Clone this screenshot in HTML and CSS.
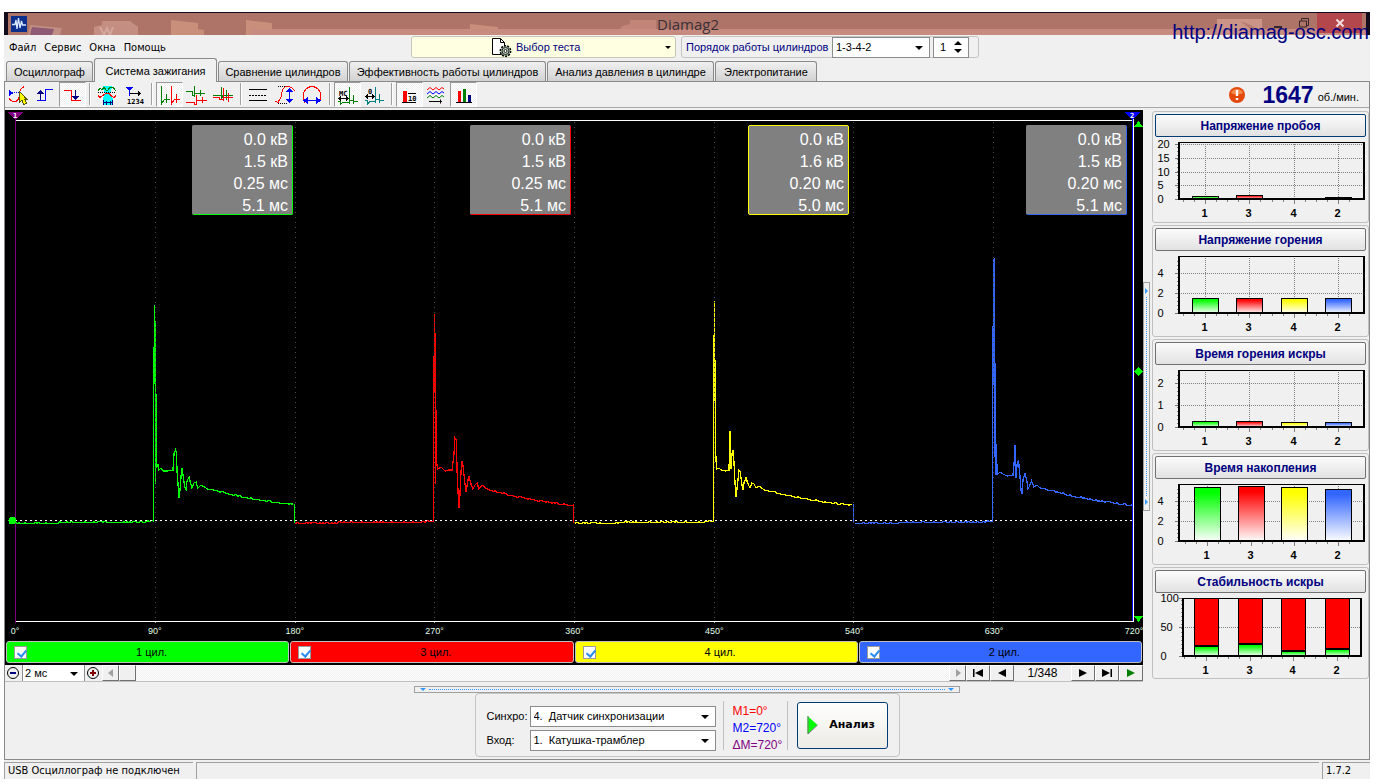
FILE: index.html
```html
<!DOCTYPE html>
<html lang="ru">
<head>
<meta charset="utf-8">
<title>Diamag2</title>
<link rel="stylesheet" href="styles.css">
</head>
<body>
<div class="window">
  <header class="titlebar">
    <svg class="wallpaper" viewBox="0 0 1358 22" preserveAspectRatio="none" aria-hidden="true">
      <path d="M242 16H1358V22H242Z" fill="#c88b7f"/>
      <path d="M22 12L54 15L52 22H20Z" fill="#c18e83"/><path d="M24 14L46 16L44 22H22Z" fill="#8f5a74"/>
      <path d="M94 8H122L130 14V22H86V14L94 12Z" fill="#c48e82"/><path d="M92 14L96 22L99 15L102 22L105 14" fill="none" stroke="#d3a79c" stroke-width="2"/>
      <path d="M163 7L190 10V16L196 17V22H163Z" fill="#c98f7b"/><path d="M238 7L264 10V16H242V22H238Z" fill="#c98f7b"/>
      <path d="M462 11L490 14V16H462Z" fill="#c98f7b"/><path d="M614 13L622 11V7H648V16H612Z" fill="#c38577"/>
      <path d="M1209 6H1254V22H1209Z" fill="#cc9488"/><path d="M1232 8Q1246 12 1250 18L1242 16Z" fill="#b77d73"/>
    </svg>
    <svg class="app-icon" viewBox="0 0 16 16" aria-hidden="true"><rect width="16" height="16" fill="#0d2f8c"/><path d="M1 8.500H4L5 4L6 13L7.500 2L9 12L10.500 5L11.500 9H15" fill="none" stroke="#dbe8ff" stroke-width="1.300"/></svg>
    <h1 class="title">Diamag2</h1>
    <div class="win-buttons">
      <button class="win-btn" aria-label="Свернуть"><svg viewBox="0 0 12 12"><path d="M2 10H10" stroke="#33252a" stroke-width="2"/></svg></button>
      <button class="win-btn" aria-label="Развернуть"><svg viewBox="0 0 12 12"><path d="M1.500 4H8.500V10H1.500Z M3.500 3.500V1.500H10.500V8.500H9" fill="none" stroke="#33252a"/></svg></button>
      <button class="win-btn close" aria-label="Закрыть"><svg viewBox="0 0 12 12"><path d="M2.500 2.500L9.500 9.500M9.500 2.500L2.500 9.500" stroke="#f4dede" stroke-width="2"/></svg></button>
    </div>
    <a class="site" href="#site">http://diamag-osc.com</a>
  </header>

  <div class="menubar">
    <nav class="menu"><a href="#file">Файл</a><a href="#service">Сервис</a><a href="#windows">Окна</a><a href="#help">Помощь</a></nav>
    <button class="test-pick">
      <svg viewBox="0 0 21 21" aria-hidden="true"><path d="M1.500 1.500H9.500L13.500 5.500V17.500H1.500Z" fill="#fff" stroke="#000"/><path d="M9.500 1.500V5.500H13.500" fill="none" stroke="#000"/><circle cx="14.500" cy="14" r="5.200" fill="#a9c3a9" stroke="#000" stroke-width="1.500" stroke-dasharray="2 1.200"/><circle cx="14.500" cy="14" r="3.500" fill="#bcd0bc" stroke="#222"/><circle cx="14.500" cy="14" r="1.500" fill="#fff" stroke="#222"/></svg>
      <span>Выбор теста</span><i class="caret"></i>
    </button>
    <div class="order-box">
      <label for="order">Порядок работы цилиндров</label>
      <span class="pick order-pick"><select id="order"><option>1-3-4-2</option></select></span>
      <span class="spin"><input type="text" value="1" aria-label="Номер цилиндра"><svg viewBox="0 0 8 14" aria-hidden="true"><path d="M0 5L4 1L8 5ZM0 9L4 13L8 9Z"/></svg></span>
    </div>
  </div>

  <div class="tabs" role="tablist">
    <button class="tab t1" role="tab">Осциллограф</button><button class="tab t2 active" role="tab" aria-selected="true">Система зажигания</button><button class="tab t3" role="tab">Сравнение цилиндров</button><button class="tab t4" role="tab">Эффективность работы цилиндров</button><button class="tab t5" role="tab">Анализ давления в цилиндре</button><button class="tab t6" role="tab">Электропитание</button>
  </div>

  <main class="page">
    <div class="toolbar">
      <button class="tool" aria-label="Курсор"><svg viewBox="0 0 27 25"><path d="M4 8L9 11L4 14Z" fill="#00f"/><path d="M9 10.500H15" stroke="#00f" stroke-dasharray="1 1"/><path d="M4 16Q5 19 9 19.500H11Q14 18 14.500 12Q15 6 19.500 4.500" fill="none" stroke="#f00"/><path d="M14.500 9.500L14.500 20L17 18.500L18.500 22.500L21.500 21.500L20 17.500H22Z" fill="#ff0" stroke="#550"/></svg></button>
      <button class="tool" aria-label="Передний фронт"><svg viewBox="0 0 27 25"><path d="M5 18.500H13.500V7.500H21" fill="none" stroke="#00f"/><path d="M8.500 18V9" stroke="#000080"/><path d="M5 12L8.500 8L12 12Z" fill="#000080"/></svg></button>
      <button class="tool on" aria-label="Задний фронт"><svg viewBox="0 0 27 25"><path d="M5 8.500H12.500V18.500H22" fill="none" stroke="#f00"/><path d="M16.500 8V16" stroke="#000080"/><path d="M13 14L16.500 18L20 14Z" fill="#000080"/></svg></button>
      <i class="sep"></i>
      <button class="tool" aria-label="Окно"><svg viewBox="0 0 27 25"><path d="M9 4H18V6L16 11L19 17V23H9V17L11 11L9 7Z" fill="#0ff"/><path d="M4 8.500L6 6.500L8 7.500L10 5.500L13 9L16 5.500L19 5.500L22 9" fill="none" stroke="#008000"/><path d="M4 10.500H22" stroke="#000" stroke-dasharray="1 1"/><path d="M4 13.500L6 15.500L8 14L12 11.500H15L18 14.500L20 15.500L22 13.500" fill="none" stroke="#f00"/><path d="M9.500 18V23M18.500 18V23M10 20.500H18M12 18.500V22.500M16 18.500V22.500" stroke="#000080"/></svg></button>
      <button class="tool" aria-label="Нумерация"><svg viewBox="0 0 27 25"><path d="M5 5H12L8.500 9Z" fill="#00f"/><path d="M8.500 8V14" stroke="#00f"/><path d="M9 11.500H19M17.500 9.500V13.500" stroke="#000"/><path d="M17 9L20 11.500L17 14Z"/><text x="6" y="22" class="mini">1234</text></svg></button>
      <i class="sep"></i>
      <button class="tool on" aria-label="Параллельно"><svg viewBox="0 0 27 25"><path d="M5.500 4V22.500M5.500 21.500L8.500 17.500H10.500V12V20.500M10.500 17.500H13.500" fill="none" stroke="#008000"/><path d="M15.500 4V22.500M15.500 21.500L18.500 17.500H20.500V12V20.500M20.500 17.500H23.500" fill="none" stroke="#f00"/></svg></button>
      <button class="tool" aria-label="Каскад"><svg viewBox="0 0 27 25"><path d="M3 9.500H9V13.500H12M11.500 4V15M12 11.500H17V8V14M17 11.500H22" fill="none" stroke="#008000"/><path d="M3 20.500H11V22.500H14M13.500 13V23M14 18.500H19V15V21M19 18.500H24" fill="none" stroke="#f00"/></svg></button>
      <button class="tool" aria-label="Наложение"><svg viewBox="0 0 27 25"><path d="M3 13.500H12V15.500M11.500 5V18M12 13.500H16V8V18M16 13.500H23" fill="none" stroke="#008000"/><path d="M3 15.500H9V17.500H13M13.500 6V19M13 15.500H18M18.500 11V20M18 15.500H23" fill="none" stroke="#f00"/></svg></button>
      <i class="sep"></i>
      <button class="tool" aria-label="Уровни"><svg viewBox="0 0 27 25"><path d="M4 7.500H22M4 18.500H22" stroke="#000"/><path d="M4 13.500H22" stroke="#000" stroke-dasharray="2 1"/></svg></button>
      <button class="tool" aria-label="Масштаб по вертикали"><svg viewBox="0 0 27 25"><path d="M6 4.500H18M6 21.500H16" stroke="#000" stroke-dasharray="1 1"/><path d="M3 19L6 20.500L9 15Q10 4.500 15 4.500Q20 4.500 22.500 9" fill="none" stroke="#f00"/><path d="M17.500 7V20" stroke="#00f" stroke-width="1.500"/><path d="M14 10L17.500 6L21 10ZM14 17L17.500 21L21 17Z" fill="#00f"/></svg></button>
      <button class="tool" aria-label="Масштаб по горизонтали"><svg viewBox="0 0 27 25"><path d="M6 20.500Q2 12 7 7Q13 2 19 7Q24 12 20 20.500" fill="none" stroke="#f00"/><path d="M6 18.500H21" stroke="#00f" stroke-width="1.500"/><path d="M9 15L4 18.500L9 22ZM17 15L22 18.500L17 22Z" fill="#00f"/></svg></button>
      <i class="sep"></i>
      <button class="tool on" aria-label="Время"><svg viewBox="0 0 27 25"><text x="5" y="14" class="mini">МС</text><path d="M5 16.500H14" stroke="#000"/><path d="M7 14L4 16.500L7 19ZM12 14L15 16.500L12 19Z"/><path d="M15.500 5V22M4 19.500H6V22.500L9 20.500H15M15 18.500H19V13V22M19 19.500H24" fill="none" stroke="#008000"/></svg></button>
      <button class="tool" aria-label="Угол"><svg viewBox="0 0 27 25"><text x="7" y="12" class="mini">0</text><path d="M5 14.500H12" stroke="#000"/><path d="M7 12L4 14.500L7 17ZM11 12L14 14.500L11 17Z"/><path d="M14.500 5V21M4 18.500H6V22.500L9 19.500H14M14 17.500H18V12V21M18 18.500H23" fill="none" stroke="#008080"/></svg></button>
      <i class="sep"></i>
      <button class="tool on" aria-label="Значения"><svg viewBox="0 0 27 25"><path d="M7 9H11V20H7Z" fill="#f00"/><path d="M6 20.500H20M12 11.500H20" stroke="#000"/><text x="12" y="19" class="mini">10</text></svg></button>
      <button class="tool" aria-label="Накопление"><svg class="smooth" viewBox="0 0 27 25"><path d="M4 8L7 5.500L10 8L13 5.500L16 8L19 5.500L21 7" fill="none" stroke="#f00"/><path d="M4 12L7 9.500L10 12L13 9.500L16 12L19 9.500L21 11" fill="none" stroke="#00f"/><path d="M4 16L7 13.500L10 16L13 13.500L16 16L19 13.500L21 15" fill="none" stroke="#008000"/><path d="M6 19.500H19M17.500 17.500V21.500" stroke="#000"/></svg></button>
      <button class="tool on" aria-label="Гистограммы"><svg viewBox="0 0 27 25"><path d="M8 9H11V20H8Z" fill="#f00"/><path d="M13 7H16V20H13Z" fill="#008000"/><path d="M18 13H21V20H18Z" fill="#000080"/><path d="M6 20.500H22" stroke="#000"/></svg></button>
      <div class="rpm">
        <svg viewBox="0 0 16 16" role="img" aria-label="Внимание"><circle cx="8" cy="8" r="8" fill="#e4490c"/><path d="M2 6A6.500 6.500 0 0 1 14 6Q8 9 2 6Z" fill="#f28a4b"/><path d="M8 3V9M8 11V13" stroke="#fff" stroke-width="2.400"/></svg>
        <strong>1647</strong><span>об./мин.</span>
      </div>
    </div>

    <div class="work">
      <section class="scope">
        <div class="plot">
          <svg id="plot" viewBox="0 0 1138 513" preserveAspectRatio="none" role="img" aria-label="Осциллограмма"></svg>
          <div class="readouts">
            <div class="readout c1"><p>0.0 кВ</p><p>1.5 кВ</p><p>0.25 мс</p><p>5.1 мс</p></div>
            <div class="readout c3"><p>0.0 кВ</p><p>1.5 кВ</p><p>0.25 мс</p><p>5.1 мс</p></div>
            <div class="readout c4"><p>0.0 кВ</p><p>1.6 кВ</p><p>0.20 мс</p><p>5.0 мс</p></div>
            <div class="readout c2"><p>0.0 кВ</p><p>1.5 кВ</p><p>0.20 мс</p><p>5.1 мс</p></div>
          </div>
        </div>
        <div class="degrees"><span>0°</span><span>90°</span><span>180°</span><span>270°</span><span>360°</span><span>450°</span><span>540°</span><span>630°</span><span>720°</span></div>
        <div class="channels">
          <label class="channel c1"><input type="checkbox" checked><span>1 цил.</span></label>
          <label class="channel c3"><input type="checkbox" checked><span>3 цил.</span></label>
          <label class="channel c4"><input type="checkbox" checked><span>4 цил.</span></label>
          <label class="channel c2"><input type="checkbox" checked><span>2 цил.</span></label>
        </div>
        <div class="scrollrow">
          <button class="round" aria-label="Уменьшить"><svg viewBox="0 0 16 16"><circle cx="8" cy="8" r="5.500" fill="none" stroke="#000"/><path d="M5 8H11" stroke="#000080" stroke-width="2"/></svg></button>
          <span class="pick scale-pick"><select aria-label="Развёртка"><option>2 мс</option></select></span>
          <button class="round" aria-label="Увеличить"><svg viewBox="0 0 16 16"><circle cx="8" cy="8" r="5.500" fill="none" stroke="#000"/><path d="M5 8H11M8 5V11" stroke="#800000" stroke-width="2"/></svg></button>
          <button class="bevel small" aria-label="Влево"><svg viewBox="0 0 10 10"><path d="M7 1V9L2 5Z" fill="#a0a0a0"/></svg></button>
          <span class="bevel small"></span>
          <span class="track"></span>
          <button class="bevel small" aria-label="Вправо"><svg viewBox="0 0 10 10"><path d="M3 1V9L8 5Z" fill="#a0a0a0"/></svg></button>
          <button class="bevel" aria-label="В начало"><svg viewBox="0 0 12 10"><path d="M1 1H2.500V9H1ZM11 1V9L3 5Z"/></svg></button>
          <button class="bevel" aria-label="Назад"><svg viewBox="0 0 12 10"><path d="M10 1V9L2 5Z"/></svg></button>
          <output class="frame-no">1/348</output>
          <button class="bevel" aria-label="Вперёд"><svg viewBox="0 0 12 10"><path d="M2 1V9L10 5Z"/></svg></button>
          <button class="bevel" aria-label="В конец"><svg viewBox="0 0 12 10"><path d="M1 1V9L9 5ZM9.500 1H11V9H9.500Z"/></svg></button>
          <button class="bevel" aria-label="Пуск"><svg viewBox="0 0 12 10"><path d="M2 1V9L10 5Z" fill="#008000"/></svg></button>
        </div>
      </section>
      <div class="vsplit"><div class="grip"><i></i><b></b><i></i></div></div>
      <aside class="side" id="side"></aside>
    </div>

    <div class="hsplit"><div class="grip"><i></i><b></b><i></i></div></div>
    <div class="controls">
      <div class="fields">
        <label for="sync">Синхро:</label><span class="pick"><select id="sync"><option>4.&nbsp; Датчик синхронизации</option></select></span>
        <label for="input">Вход:</label><span class="pick"><select id="input"><option>1.&nbsp; Катушка-трамблер</option></select></span>
      </div>
      <div class="marks"><span class="m1">M1=0°</span><span class="m2">M2=720°</span><span class="dm">ΔM=720°</span></div>
      <button class="analyze"><svg viewBox="0 0 10 20" aria-hidden="true"><path d="M0 1L10 10L0 19Z" fill="#0f0"/><path d="M.5 1V19L10 10" fill="none" stroke="#777"/></svg><span>Анализ</span></button>
    </div>
  </main>

  <footer class="status"><span class="s1">USB Осциллограф не подключен</span><span class="s2"></span><span class="s3">1.7.2</span></footer>
</div>
<script src="app.js"></script>
</body>
</html>
```

FILE: styles.css
```css
* { box-sizing: border-box; }
body {
  margin: 0;
  padding: 12px 12px 5px 4px;
  background: #fff;
  color: #000;
  font: 11px/14px "Liberation Sans", Arial, sans-serif;
}
button, input, select { font: inherit; color: inherit; margin: 0; padding: 0; border: 0; background: none; border-radius: 0; }
svg { display: block; }
a { color: inherit; text-decoration: none; }
p { margin: 0; }

.window { display: flex; flex-direction: column; min-height: calc(100vh - 17px); background: #f0f0f0; }

/* title bar */
.titlebar {
  position: relative;
  display: flex;
  align-items: center;
  height: 23px;
  padding: 0 4px 0 3px;
  border: solid #120c1c;
  border-width: 1px 4px 0 4px;
  background: #ae7468;
}
.wallpaper { position: absolute; inset: 0; width: 100%; height: 100%; }
.app-icon { position: relative; width: 16px; height: 16px; }
.title { position: relative; flex: 1; margin: 0 0 0 84px; text-align: center; font: 15px/20px "Open Sans", sans-serif; color: #3a3038; }
.win-buttons { position: relative; display: flex; align-self: stretch; }
.win-btn { display: flex; align-items: center; justify-content: center; width: 26px; height: 20px; }
.win-btn svg { width: 12px; height: 12px; }
.win-btn.close { width: 45px; background: #b4474b; }
.site { position: absolute; right: -3px; top: 8px; font-size: 20px; line-height: 22px; color: #000080; }

/* menu row */
.menubar { display: flex; align-items: flex-start; height: 24px; padding: 0 0 0 5px; }
.menu { display: flex; gap: 8px; width: 402px; padding-top: 6px; font: 11px/14px "DejaVu Sans Condensed", "DejaVu Sans", sans-serif; }
.test-pick {
  display: flex;
  align-items: center;
  width: 265px;
  height: 22px;
  margin-top: 1px;
  padding: 0 4px 0 79px;
  gap: 4px;
  border: 1px solid #c8c8b8;
  border-radius: 3px;
  background: #ffffe1;
  color: #000080;
}
.test-pick svg { width: 21px; height: 21px; }
.test-pick span { flex: 1; text-align: left; }
.caret { border: 3px solid transparent; border-top-color: #000; border-bottom: 0; }
.order-box {
  display: flex;
  align-items: center;
  gap: 3px;
  height: 22px;
  margin: 1px 0 0 5px;
  padding: 0 9px 0 4px;
  border: 1px solid #c4c4c4;
  border-radius: 3px;
  color: #000080;
}
.order-box label { width: 143px; white-space: nowrap; }
.pick { position: relative; display: block; height: 21px; border: 1px solid #8c8c8c; background: #fff; color: #000; }
.pick select { display: block; width: 100%; height: 100%; padding: 0 4px 1px 3px; appearance: none; outline: 0; }
.pick::after { content: ""; position: absolute; right: 6px; top: 8px; border: 4px solid transparent; border-top-color: #000; border-bottom: 0; pointer-events: none; }
.order-pick { width: 98px; }
.spin { display: flex; align-items: center; width: 36px; height: 21px; border: 1px solid #8c8c8c; background: #fff; color: #000; }
.spin input { width: 20px; padding-left: 6px; }
.spin svg { width: 8px; height: 14px; }

/* tabs */
.tabs { display: flex; align-items: flex-end; gap: 1px; padding-left: 2px; height: 22px; }
.tab {
  height: 20px;
  border: 1px solid #8a8a8a;
  border-bottom: 0;
  border-radius: 3px 3px 0 0;
  background: linear-gradient(#f0f0f0, #d2d2d2);
  white-space: nowrap;
}
.tab.active { position: relative; height: 24px; margin-bottom: -1px; background: #f0f0f0; }
.t1 { width: 87px; }
.t2 { width: 123px; }
.t3 { width: 130px; }
.t4 { width: 197px; }
.t5 { width: 167px; }
.t6 { width: 102px; }

/* page */
.page { flex: 1; display: flex; flex-direction: column; border: 1px solid #8a8a8a; }
.toolbar { display: flex; align-items: stretch; height: 26px; border-bottom: 1px solid #a8a8a8; }
.tool { width: 27px; height: 25px; border: 1px solid transparent; }
.tool svg { width: 27px; height: 25px; margin: -1px; shape-rendering: crispEdges; }
.tool svg.smooth { shape-rendering: auto; }
.tool.on { border-color: #9a9a9a #fff #fff #9a9a9a; background: repeating-conic-gradient(#fff 0 25%, #f0f0f0 0 50%) 0 0 / 2px 2px; }
.mini { font: bold 7px "DejaVu Sans Mono", monospace; }
.sep { width: 8px; height: 22px; margin-top: 1px; border-left: 3px solid transparent; background: linear-gradient(90deg, #a0a0a0 1px, #fff 1px 2px, transparent 2px) no-repeat; }
.rpm { display: flex; align-items: center; margin-left: auto; padding-right: 10px; }
.rpm svg { width: 16px; height: 16px; margin-right: 17px; }
.rpm strong { font-size: 23px; line-height: 24px; color: #000080; margin-right: 4px; }
.rpm span { padding-top: 4px; }

.work { flex: 1; display: flex; padding-top: 2px; }
.scope { flex: 1; display: flex; flex-direction: column; background: #000; }
.plot { position: relative; flex: 1; min-height: 300px; }
.plot > svg { position: absolute; inset: 0; width: 100%; height: 100%; shape-rendering: crispEdges; }
.readouts { position: absolute; top: 15px; left: 10px; right: 16px; display: grid; grid-template-columns: repeat(4, 1fr); justify-items: end; }
.readout {
  width: 101px;
  padding: 3px 4px 0 0;
  border: 1px solid;
  border-radius: 2px;
  background: #808080;
  text-align: right;
  font-size: 16px;
  line-height: 22px;
}
.readout p { color: #fff; height: 22px; }
.readout p:last-child { height: 19px; }
.readout.c1 { border-color: #808080 #0f0 #0f0 #808080; }
.readout.c3 { border-color: #808080 #f00 #f00 #808080; }
.readout.c4 { border-color: #ff0; }
.readout.c2 { border-color: #808080 #36f #36f #808080; }
.degrees { display: flex; justify-content: space-between; height: 18px; padding: 0 9px 0 10px; font-size: 9px; line-height: 16px; color: #e0ffe8; }
.degrees span { display: flex; justify-content: center; width: 0; }
.channels { display: flex; gap: 1px; padding: 0 1px 2px; }
.channel {
  flex: 1;
  display: flex;
  align-items: center;
  height: 22px;
  padding: 0 12px 0 7px;
  border: 1px solid #c0c0c0;
  border-radius: 3px;
}
.channel span { flex: 1; text-align: center; }
.channel input { appearance: none; width: 13px; height: 13px; border: 1px solid #9a9a9a; background: #fff; }
.channel input:checked::before { content: ""; display: block; width: 4px; height: 7px; margin: 1px 0 0 4px; border: solid #2a8cf0; border-width: 0 2px 2px 0; transform: rotate(40deg); }
.channel.c1 { background: #0f0; }
.channel.c3 { background: #f00; }
.channel.c4 { background: #ff0; }
.channel.c2 { background: #36f; }

.scrollrow { display: flex; height: 17px; background: #f0f0f0; border-bottom: 1px solid #c0c0c0; }
.round { width: 17px; }
.round svg { width: 16px; height: 16px; }
.scale-pick { width: 63px; height: 16px; border-width: 0 1px 0 1px; }
.scale-pick::after { top: 7px; }
.scale-pick select { padding: 0 2px; }
.bevel { display: flex; align-items: center; justify-content: center; width: 24px; height: 16px; border: 1px solid; border-color: #fff #707070 #707070 #fff; background: #f0f0f0; }
.bevel svg { width: 12px; height: 10px; }
.bevel.small { width: 17px; }
.track { flex: 1; background: repeating-conic-gradient(#fff 0 25%, #f0f0f0 0 50%) 0 0 / 2px 2px; }
.frame-no { width: 57px; text-align: center; font-size: 12px; line-height: 17px; }

.vsplit { display: flex; align-items: center; width: 8px; }
.grip { display: flex; align-items: center; gap: 3px; border: 1px solid #a0a0a0; }
.grip i { border: 3px solid transparent; }
.grip b { flex: 1; }
.vsplit .grip { flex-direction: column; width: 7px; height: 229px; padding: 5px 0; }
.vsplit i { border-left-color: #39f; border-right: 0; }
.vsplit b { border-left: 1px dotted #39f; }
.hsplit { display: flex; justify-content: center; padding-top: 4px; }
.hsplit .grip { width: 546px; height: 7px; padding: 0 5px; }
.hsplit i { border-top-color: #39f; border-bottom: 0; }
.hsplit b { border-top: 1px dotted #39f; }

/* charts */
.side { display: flex; flex-direction: column; gap: 2px; width: 217px; padding-top: 1px; margin-left: 1px; }
.panel { height: 112px; border: 1px solid #c0c0c0; border-radius: 3px; }
.panel button {
  display: block;
  width: calc(100% - 4px);
  height: 23px;
  margin: 2px 2px 1px;
  border: 1px solid #707070;
  border-radius: 2px;
  background: linear-gradient(#fbfbfb, #e2e2e2);
  font-weight: bold;
  font-size: 12px;
  color: #000080;
}
.panel:first-child button { border-color: #003c74; }
.panel svg { width: 100%; height: 83px; overflow: visible; shape-rendering: crispEdges; }
.yl { font-size: 11px; }
.xl { font-size: 11px; font-weight: bold; text-anchor: middle; }

/* bottom controls */
.controls { align-self: center; display: flex; align-items: center; height: 64px; margin-bottom: 2px; padding: 0 11px; border: 1px solid #c4c4c4; border-radius: 4px; }
.fields { display: grid; grid-template-columns: 43px 186px; row-gap: 3px; align-items: center; margin-top: 6px; }
.marks { display: flex; flex-direction: column; gap: 3px; width: 65px; height: 49px; margin: 0 9px 0 7px; padding: 3px 0 0 9px; border: solid #c0c0c0; border-width: 0 1px; font-size: 12px; }
.m1 { color: #f00; }
.m2 { color: #00f; }
.dm { color: #800080; }
.analyze { display: flex; align-items: center; width: 91px; height: 47px; padding-left: 9px; border: 1px solid #003c74; border-radius: 3px; background: linear-gradient(#fff, #ecebe5); font: bold 11px/14px "DejaVu Sans", sans-serif; }
.analyze svg { width: 11px; height: 20px; }
.analyze span { flex: 1; text-align: center; }

/* status */
.status { display: flex; gap: 3px; height: 19px; padding-top: 2px; font: 11px/16px "DejaVu Sans Condensed", "DejaVu Sans", sans-serif; }
.status span { border: solid #a0a0a0; border-width: 1px 0 0 1px; padding-left: 3px; white-space: nowrap; }
.s1 { width: 189px; }
.s2 { flex: 1; }
.s3 { width: 48px; }
```

FILE: app.js
```js
const NS = 'http://www.w3.org/2000/svg';
function add(parent, name, attrs, text) {
  const el = document.createElementNS(NS, name);
  for (const key in attrs) el.setAttribute(key, attrs[key]);
  if (text !== undefined) el.textContent = text;
  parent.appendChild(el);
  return el;
}

/* oscillogram */
const plot = document.getElementById('plot');
const gridX = [150.5, 290.5, 429.5, 569.5, 709.5, 848.5, 988.5];

const traces = [
  { color: '#0f0', from: 10, rise: 148.5, pts: [[148.5,321],[149.5,195],[150,217],[150.500,374],[151,284],[151.500,353],[152,357],[153,355],[154,360],[156,358],[158,361],[162,361],[168,360],[169,344],[170.500,340],[171.500,343],[172,361],[173,374],[174,388],[175,380],[176,367],[177,358],[178,365],[180,378],[181,380],[182,371],[184,367],[185,371],[187,378],[189,373],[191,372],[193,378],[196,375],[201,378]], end: [289, 394] },
  { color: '#f00', from: 290, rise: 428.5, pts: [[428.5,330],[429.5,204],[430,230],[430.500,374],[431,300],[431.500,353],[433,359],[436,357],[440,361],[444,360],[447,360],[449,344],[450,328],[451.500,330],[452,360],[453,381],[454,398],[455,384],[456,362],[457,351],[458,356],[460,374],[461,382],[463,370],[464,367],[466,374],[468,379],[470,375],[472,373],[474,379],[477,375],[482,379]], end: [568, 395] },
  { color: '#ff0', from: 570, rise: 708.5, pts: [[708.5,294],[709.5,191],[710,272],[710.500,330],[711,351],[712,359],[714,358],[716,360],[721,361],[724,360],[725,321],[726,359],[727,344],[728,340],[729,353],[730,372],[731,387],[733,370],[734,360],[735,361],[737,375],[738,380],[739,373],[741,368],[743,374],[745,378],[747,373],[749,374],[751,378],[754,376],[758,379]], end: [848, 395] },
  { color: '#36f', from: 850, rise: 987.5, pts: [[987.5,348],[988.500,150],[989.500,149],[989.900,347],[990.500,253],[991,365],[992,354],[993,364],[995,362],[998,364],[1002,366],[1008,365],[1009,355],[1010,335],[1011,368],[1012,355],[1013.500,350],[1015,367],[1016,380],[1017,384],[1018,370],[1020,363],[1022,372],[1023,379],[1025,375],[1026.500,371],[1029,377],[1032,375],[1035,378],[1041,379]], end: [1127, 395] }
];

function noise(n) {
  const v = Math.sin(n * 12.9898) * 43758.5453;
  return v - Math.floor(v) > 0.72 ? -1 : 0;
}
traces.forEach(function (t, index) {
  let d = 'M' + t.from + ' ' + (index ? 413.5 : 412.5);
  for (let x = t.from + 1; x < t.rise; x += 1.5) {
    const drift = Math.round((x - t.from) / 139 * 1.6);
    d += 'L' + x + ' ' + (413.5 - drift + noise(x));
  }
  d += 'L' + t.rise + ' 411';
  t.pts.forEach(function (p) { d += 'L' + p[0] + ' ' + p[1]; });
  const start = t.pts[t.pts.length - 1];
  const span = t.end[0] - start[0];
  for (let x = start[0] + 2; x <= t.end[0]; x += 1.5) {
    const k = (x - start[0]) / span;
    const y = start[1] + (t.end[1] - start[1]) * (1.5 * k - 0.5 * k * k);
    d += 'L' + x + ' ' + (Math.round(y) + 0.5 + noise(x));
  }
  add(plot, 'path', { d: d, fill: 'none', stroke: t.color, 'stroke-width': 1.3 });
  if (index < 3) {
    add(plot, 'path', { d: 'M' + (t.end[0] + 0.5) + ' 394V413', stroke: index === 2 ? '#36f' : t.color, 'stroke-width': 1.3 });
  }
});
gridX.forEach(function (x) {
  add(plot, 'path', { d: 'M' + x + ' 12V511', stroke: '#4a4a4a', 'stroke-dasharray': '1 4' });
  add(plot, 'path', { d: 'M' + x + ' 511V514', stroke: '#aaa' });
});
add(plot, 'path', { d: 'M10 410.5H1128', stroke: '#fff', 'stroke-dasharray': '2 3' });
add(plot, 'path', { d: 'M10 10.5H1128M10 511.5H1128M1128.5 9V512', stroke: '#fff', fill: 'none' });
add(plot, 'path', { d: 'M1127.5 8V511', stroke: '#00f' });
add(plot, 'path', { d: 'M10.5 8V513', stroke: '#800080' });
add(plot, 'path', { d: 'M3 2H18L10.5 10Z', fill: '#800080' });
add(plot, 'path', { d: 'M1120 2H1135L1127.5 10Z', fill: '#00f' });
add(plot, 'text', { x: 8, y: 8, fill: '#fff', class: 'mini' }, '1');
add(plot, 'text', { x: 1125, y: 8, fill: '#fff', class: 'mini' }, '2');
add(plot, 'path', { d: 'M1129 17H1138L1133.5 11ZM1129 506H1138L1133.5 512ZM1129 261.5L1133.5 257L1138 261.5L1133.5 266Z', fill: '#0f0' });
add(plot, 'circle', { cx: 7.5, cy: 410.5, r: 4, fill: '#0f0' });

/* cylinder bar charts */
const colors = ['#00ff00', '#ff0000', '#ffff00', '#3366ff'];
const names = ['1', '3', '4', '2'];
const charts = [
  { title: 'Напряжение пробоя', ticks: [['20', 6], ['15', 20], ['10', 34], ['5', 47], ['0', 61]], cats: [51, 95, 140, 184], tops: [58, 57, 61, 59] },
  { title: 'Напряжение горения', ticks: [['4', 21], ['2', 41], ['0', 61]], cats: [51, 95, 140, 184], tops: [46, 46, 46, 46] },
  { title: 'Время горения искры', ticks: [['2', 17], ['1', 39], ['0', 61]], cats: [51, 95, 140, 184], tops: [55, 55, 56, 56] },
  { title: 'Время накопления', ticks: [['4', 21], ['2', 41], ['0', 61]], cats: [53, 97, 140, 184], tops: [7, 6, 7, 9] },
  { title: 'Стабильность искры', ticks: [['100', 4], ['50', 33], ['0', 62]], cats: [52, 96, 139, 183], tops: [52, 50, 57, 55], stacked: true }
];
const side = document.getElementById('side');
charts.forEach(function (c, n) {
  const panel = document.createElement('section');
  panel.className = 'panel';
  const button = document.createElement('button');
  button.textContent = c.title;
  panel.appendChild(button);
  const svg = add(panel, 'svg', { viewBox: '0 0 214 83', role: 'img', 'aria-label': c.title });
  const left = c.stacked ? 29 : 25;
  const right = c.stacked ? 207 : 210;
  const base = c.ticks[c.ticks.length - 1][1];
  const defs = add(svg, 'defs', {});
  colors.forEach(function (color, i) {
    const g = add(defs, 'linearGradient', { id: 'g' + n + i, x1: 0, y1: 0, x2: 0, y2: 1 });
    add(g, 'stop', { offset: 0.1, 'stop-color': c.stacked ? '#00ff00' : color });
    add(g, 'stop', { offset: 1, 'stop-color': '#fff' });
  });
  c.ticks.forEach(function (t) {
    add(svg, 'path', { d: 'M' + (left - 4) + ' ' + (t[1] + 0.5) + 'h4', stroke: '#777' });
    add(svg, 'path', { d: 'M' + left + ' ' + (t[1] + 0.5) + 'H' + right, stroke: '#808080', 'stroke-dasharray': '1 1' });
    add(svg, 'text', { x: c.stacked ? 7 : 4, y: t[1] + 4, class: 'yl' }, t[0]);
  });
  for (let y = base - 4; y > 5; y -= 4) {
    add(svg, 'path', { d: 'M' + (left - 2) + ' ' + (y + 0.5) + 'h2', stroke: '#808080' });
  }
  c.cats.forEach(function (x, i) {
    add(svg, 'path', { d: 'M' + (x + 0.5) + ' 4V' + base, stroke: '#808080', 'stroke-dasharray': '1 1' });
    add(svg, 'path', { d: 'M' + (x + 0.5) + ' ' + base + 'v5M' + (x - 10.5) + ' ' + base + 'v3M' + (x + 11.5) + ' ' + base + 'v3M' + (x - 21.5) + ' ' + base + 'v3', stroke: '#808080' });
    const w = c.stacked ? 24 : 26;
    const top = c.tops[i];
    if (c.stacked) add(svg, 'rect', { x: x - 11.5, y: 4.5, width: w, height: top - 4, fill: '#ff0000', stroke: '#000' });
    if (top < base) add(svg, 'rect', { x: x - (c.stacked ? 11.5 : 12.5), y: top + 0.5, width: w, height: base - top, fill: 'url(#g' + n + i + ')', stroke: '#000' });
    if (c.stacked) add(svg, 'path', { d: 'M' + (x - 12) + ' ' + top + 'h25', stroke: '#000', 'stroke-width': 2 });
    add(svg, 'text', { x: x, y: base + 18, class: 'xl' }, names[i]);
  });
  add(svg, 'path', { d: 'M' + (left - 1) + ' 4.5H' + (right + 1), stroke: '#000' });
  add(svg, 'path', { d: 'M' + left + ' 4V' + (base + 1) + 'M' + right + ' 4V' + (base + 1) + 'M' + (left - 1) + ' ' + base + 'H' + (right + 1), stroke: '#000', 'stroke-width': 2 });
  side.appendChild(panel);
});
```
